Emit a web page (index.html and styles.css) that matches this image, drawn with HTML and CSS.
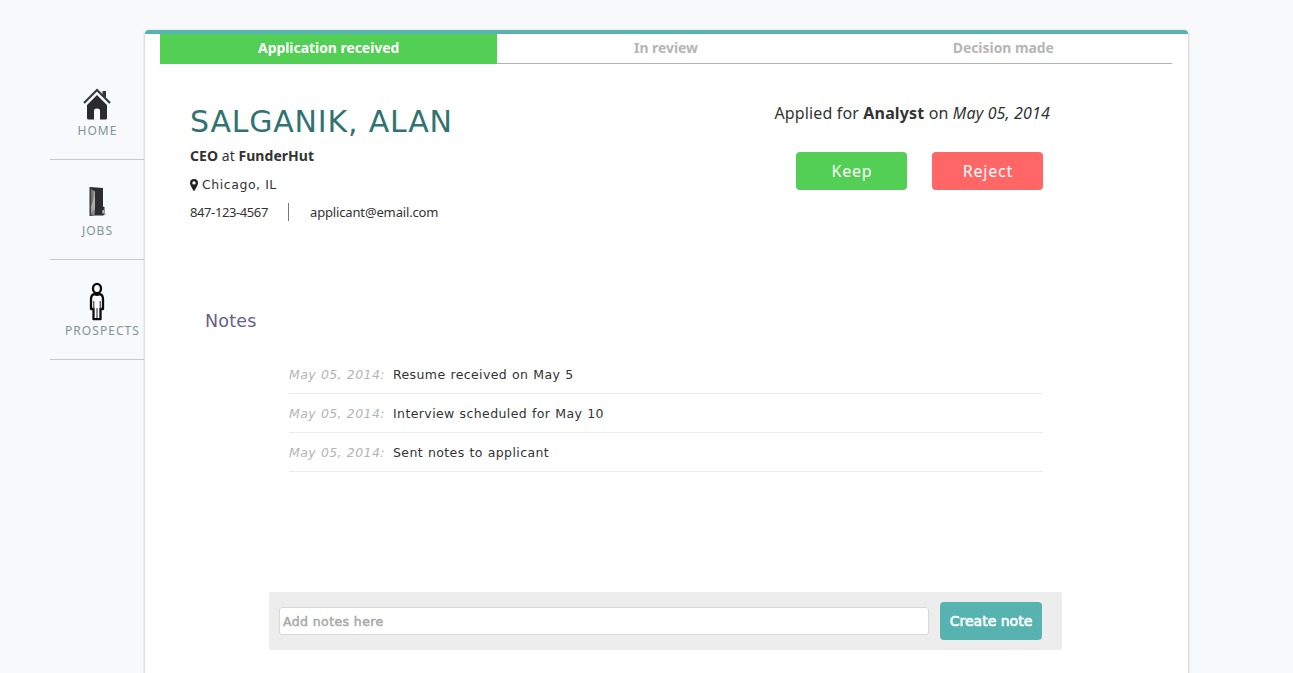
FILE: index.html
```html
<!DOCTYPE html>
<html lang="en">
<head>
<meta charset="utf-8">
<title>Applicant</title>
<link rel="stylesheet" href="styles.css">
</head>
<body>
<div class="page">
  <nav class="sidebar">
    <a class="nav-item">
      <svg class="nav-icon" width="30" height="34" viewBox="0 0 30 34">
        <path d="M20.500 5h3.500v8l-3.500-4z" fill="#333"/>
        <path d="M2 17 15 4l13 13" fill="none" stroke="#3a3a3a" stroke-width="2.200"/>
        <path d="M15 9 25 19v13q0 1.500-1.500 1.500h-5.500v-9q0-2-3-2t-3 2v9H6.500q-1.500 0-1.500-1.500V19z" fill="#2b2b2d"/>
      </svg>
      <span class="nav-label">HOME</span>
    </a>
    <a class="nav-item">
      <svg class="nav-icon" width="30" height="34" viewBox="0 0 30 34">
        <defs><linearGradient id="panel" x1="0" y1="0" x2="1" y2="0"><stop offset="0" stop-color="#555"/><stop offset="1" stop-color="#a8a8a8"/></linearGradient></defs>
        <path d="M7.500 1l13.500 1v27.500H13L7.500 30z" fill="#2d2d2f"/>
        <path d="M8.500 2.500l4.500 3v16l-.6 7.500-3.900.6z" fill="url(#panel)"/>
        <path d="M9 20l4-11v13l-4 6z" fill="#c4c4c4" opacity=".55"/>
        <path d="M20.500 20.500l2 .5v8l-2 .5z" fill="#333"/>
        <path d="M20.500 24h1.300v3.500h-1.300z" fill="#ddd"/>
        <path d="M22 28.500l3-1-2 2z" fill="#bbb"/>
      </svg>
      <span class="nav-label">JOBS</span>
    </a>
    <a class="nav-item">
      <svg class="nav-icon tall" width="30" height="40" viewBox="0 0 30 40">
        <ellipse cx="15" cy="7.500" rx="4" ry="4.700" fill="#fff" stroke="#0b0b0b" stroke-width="2.300"/>
        <path d="M12.500 13Q9 13.500 9 18.500v9.500h2.500v10.200h7V28H21v-9.500q0-5-3.500-5.500Q15 14.500 12.500 13z" fill="#fff" stroke="#0b0b0b" stroke-width="2.300" stroke-linejoin="round"/>
        <path d="M11.800 20v9M18.200 20v9M15 27v10" fill="none" stroke="#333" stroke-width="1.100"/>
      </svg>
      <span class="nav-label">PROSPECTS</span>
    </a>
  </nav>
  <main class="card">
    <ol class="steps">
      <li class="step active">Application received</li>
      <li class="step">In review</li>
      <li class="step">Decision made</li>
    </ol>
    <section class="profile">
      <div class="person">
        <h1 class="name">SALGANIK, ALAN</h1>
        <p class="role"><b>CEO</b> at <b>FunderHut</b></p>
        <p class="place"><svg class="pin" width="8" height="12" viewBox="0 0 8 12"><path fill-rule="evenodd" d="M4 0a4 4 0 0 1 4 4c0 1.500-.6 2.200-1 3.200L4.700 11.500q-.7.900-1.400 0L1 7.200C.6 6.200 0 5.500 0 4a4 4 0 0 1 4-4zm0 2.200a1.700 1.700 0 1 0 0 3.400 1.700 1.700 0 0 0 0-3.400z" fill="#222"/></svg>Chicago, IL</p>
        <p class="contact"><span class="phone">847-123-4567</span><span class="email">applicant@email.com</span></p>
      </div>
      <div class="decision">
        <p class="applied">Applied for <b>Analyst</b> on <i>May 05, 2014</i></p>
        <div class="actions">
          <button class="btn keep">Keep</button>
          <button class="btn reject">Reject</button>
        </div>
      </div>
    </section>
    <section class="notes">
      <h2 class="notes-title">Notes</h2>
      <ul class="note-list">
        <li class="note"><i class="date">May 05, 2014:</i><span>Resume received on May 5</span></li>
        <li class="note"><i class="date">May 05, 2014:</i><span>Interview scheduled for May 10</span></li>
        <li class="note"><i class="date">May 05, 2014:</i><span>Sent notes to applicant</span></li>
      </ul>
    </section>
    <form class="note-form">
      <input class="note-input" type="text" placeholder="Add notes here">
      <button class="create" type="button">Create note</button>
    </form>
  </main>
</div>
</body>
</html>
```
FILE: styles.css
```css
* { box-sizing: border-box; }
body { margin: 0; background: #f8f9fb; color: #333; font-family: "Noto Sans", sans-serif; overflow: hidden; }
h1, h2, p, ul, ol { margin: 0; padding: 0; font-weight: normal; }
li { list-style: none; }
button { border: 0; padding: 0; }
.page { display: flex; height: 673px; padding: 30px 0 0 50px; }
.sidebar { width: 94px; margin-right: 1px; padding-top: 30px; }
.nav-item { display: flex; flex-direction: column; align-items: center; height: 100px; padding-top: 26px; border-bottom: 1px solid #c6c8ca; }
.nav-icon { flex: none; margin-bottom: 2px; }
.nav-icon.tall { margin: -5px 0 1px; }
.nav-label { font-size: 12px; line-height: 17px; letter-spacing: 1.05px; margin-left: 1px; color: #7f9694; }
.nav-item:last-child .nav-label { margin-left: 11px; }
.card { width: 1043px; height: 660px; background: #fff; border-top: 4px solid #56b3b0; border-radius: 4px 4px 0 0; box-shadow: 0 1px 3px rgba(0, 0, 0, .3); padding: 0 16px 0 15px; }
.steps { display: flex; height: 30px; }
.step { flex: 1; border-bottom: 1px solid #b3b3b3; text-align: center; font-size: 13.900px; line-height: 28px; font-weight: bold; color: #b5b5b5; }
.step.active { background: #53cf55; border-color: #53cf55; color: #fff; }
.profile { display: flex; justify-content: space-between; height: 233px; padding: 37px 122px 0 30px; }
.name { font-family: "DejaVu Sans", sans-serif; font-size: 30px; line-height: 42px; letter-spacing: .8px; color: #317370; }
.role { font-size: 14px; line-height: 20px; letter-spacing: .05px; margin-top: 3px; }
.place { display: flex; align-items: center; font-family: "DejaVu Sans", sans-serif; font-size: 12.500px; line-height: 20px; letter-spacing: .55px; margin-top: 9px; }
.pin { margin-right: 4px; }
.contact { display: flex; font-size: 13px; line-height: 18px; margin-top: 8px; }
.phone { width: 99px; border-right: 1px solid #777; letter-spacing: -.4px; }
.email { padding-left: 21px; letter-spacing: -.15px; }
.applied { font-size: 16px; line-height: 24px; letter-spacing: .15px; white-space: nowrap; }
.actions { display: flex; gap: 25px; margin: 27px 0 0 22px; }
.btn { width: 111px; height: 38px; border-radius: 4px; color: #fff; font: 16px "Noto Sans", sans-serif; letter-spacing: .8px; }
.keep { background: #53cf55; }
.reject { background: #ff6767; }
.notes { height: 295px; padding: 12px 129px 0 45px; font-family: "DejaVu Sans", sans-serif; }
.notes-title { font-size: 17.500px; line-height: 24px; letter-spacing: .2px; color: #66618a; }
.note-list { margin: 22px 0 0 84px; }
.note { display: flex; height: 39px; border-bottom: 1px solid #ebebeb; font-size: 12.500px; line-height: 39px; letter-spacing: .4px; word-spacing: .5px; }
.date { width: 104px; color: #b5b5b5; }
.note-form { display: flex; align-items: center; width: 793px; height: 58px; margin-left: 109px; padding-left: 10px; background: #ededed; border-radius: 2px; }
.note-input { width: 650px; height: 28px; margin-right: 11px; border: 1px solid #d8d8d8; border-radius: 3px; padding: 0 3px; font: 12.500px "DejaVu Sans", sans-serif; letter-spacing: .4px; }
.note-input::placeholder { color: #aaa; -webkit-text-stroke: .5px #aaa; }
.create { width: 102px; height: 38px; background: #56b3b0; color: #fff; border-radius: 4px; font: 14px "DejaVu Sans", sans-serif; -webkit-text-stroke: .6px #fff; }
```
